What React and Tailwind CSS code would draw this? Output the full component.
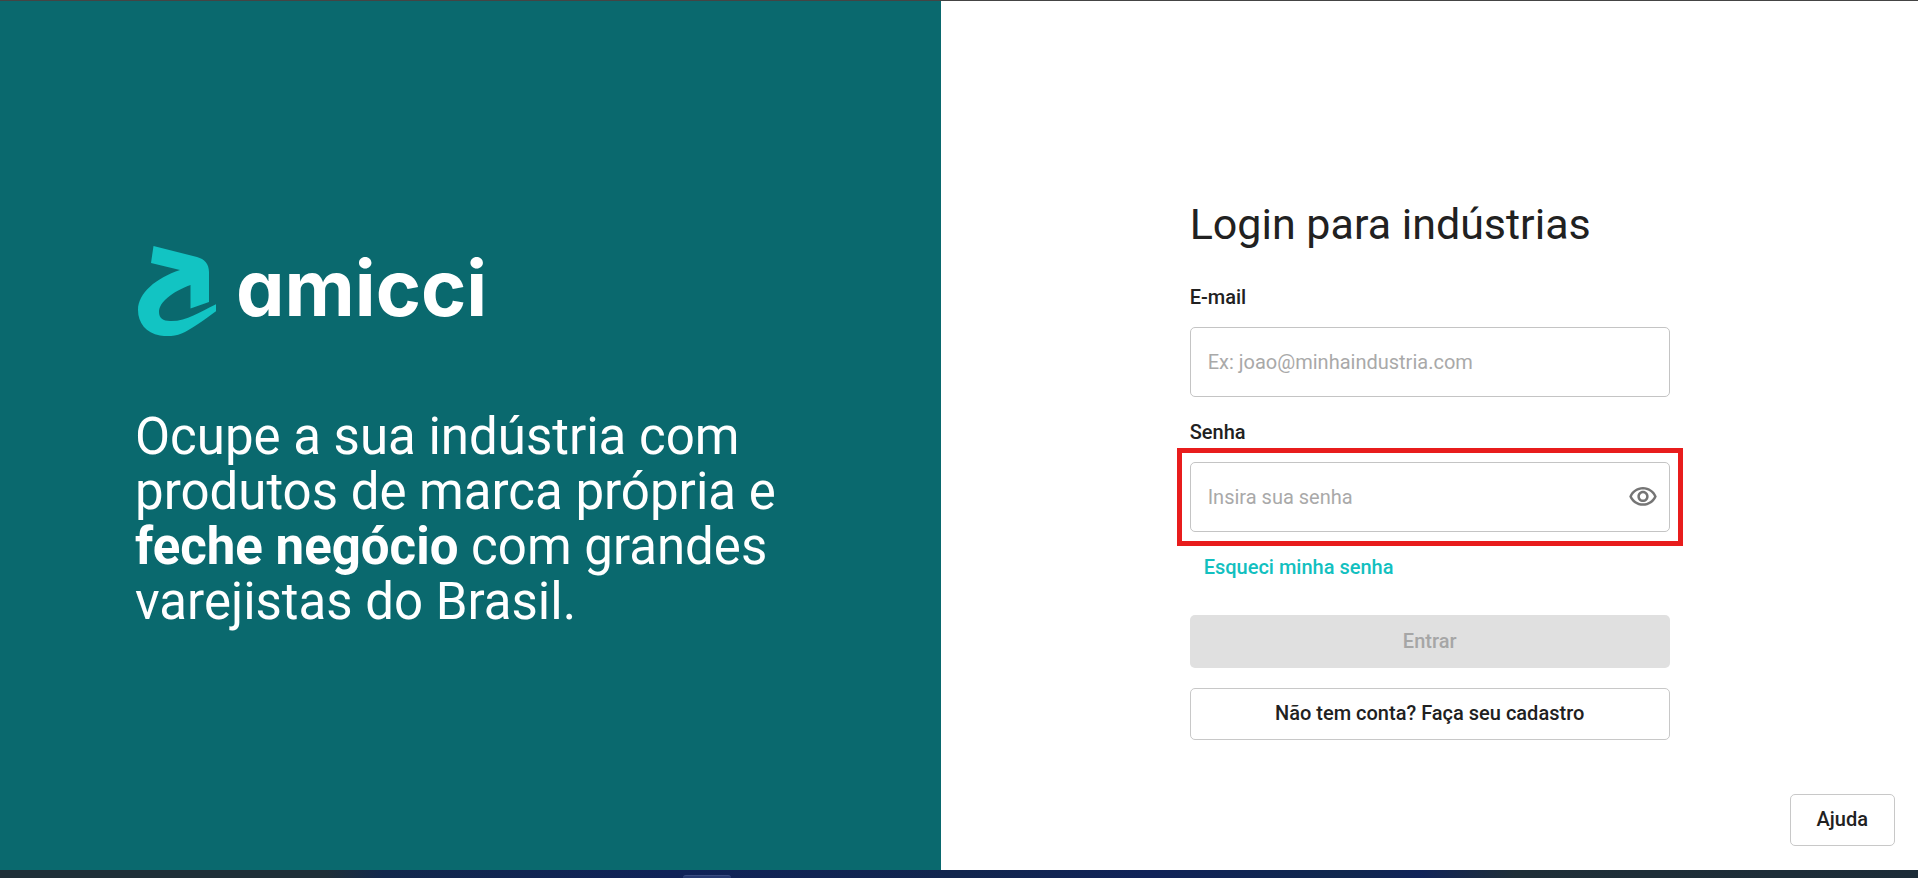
import { useState } from 'react';

function Logo() {
  return (
    <div className="flex items-center gap-5">
      <svg width="81" height="90" viewBox="-1 0 81 90" aria-hidden="true">
        <path
          fill="#12c4c3"
          d="M17.500 0 L61 11 C68.500 13 73 18 73 26 V56 L54.500 62.500 V39 C36 46 23 56 23 66 C23 72 27 75 34 75 C51 75.500 63 66 80.500 58 V65 C68 74 57 82 49 86 C41 90 33 91 24 89.500 C10 87 2 77 2 64 C2 47 20 32 44 24 L15 17 Z"
        />
      </svg>
      <span className="pb-1.5 font-['Inter',sans-serif] text-[77px] leading-[84px] font-bold text-white [font-feature-settings:'cv11']">
        amicci
      </span>
    </div>
  );
}

function EyeIcon() {
  return (
    <svg width="30" height="30" viewBox="0 0 24 24" fill="currentColor" aria-hidden="true">
      <path d="M12 6c3.79 0 7.17 2.13 8.82 5.5C19.17 14.87 15.79 17 12 17s-7.17-2.13-8.82-5.5C4.83 8.13 8.21 6 12 6m0-2C7 4 2.73 7.11 1 11.5 2.73 15.89 7 19 12 19s9.27-3.11 11-7.5C21.27 7.11 17 4 12 4zm0 5c1.38 0 2.5 1.12 2.5 2.5S13.38 14 12 14s-2.5-1.12-2.5-2.5S10.62 9 12 9m0-2c-2.48 0-4.5 2.02-4.5 4.5S9.52 16 12 16s4.5-2.02 4.5-4.5S14.48 7 12 7z" />
    </svg>
  );
}

function App() {
  const [email, setEmail] = useState('');
  const [password, setPassword] = useState('');
  const [showPassword, setShowPassword] = useState(false);

  const canSubmit = email !== '' && password !== '';

  return (
    <div className="flex min-h-screen flex-col border-t border-[#444444] bg-white font-['Roboto',sans-serif] text-[#212121]">
      <div className="flex flex-1">
        {/* Brand panel */}
        <section className="flex w-[49.08%] flex-col justify-center gap-[73px] bg-[#0a696e] px-[135px] pt-1">
          <Logo />
          <p className="-mr-8 text-[51px] leading-[55px] text-white">
            Ocupe a sua indústria com produtos de marca própria e{' '}
            <strong className="font-bold">feche negócio</strong> com grandes varejistas do Brasil.
          </p>
        </section>

        {/* Login form */}
        <main className="relative flex flex-1 flex-col items-center justify-center">
          <form className="flex w-[480px] flex-col pt-[68px]" onSubmit={(e) => e.preventDefault()}>
            <h1 className="mb-9 text-[43px] leading-[50px]">Login para indústrias</h1>

            <label htmlFor="email" className="mb-[18px] text-xl leading-6 font-medium">
              E-mail
            </label>
            <input
              id="email"
              type="email"
              value={email}
              onChange={(e) => setEmail(e.target.value)}
              placeholder="Ex: joao@minhaindustria.com"
              className="mb-[23px] h-[70px] w-full rounded-[5px] border border-[#c4c4c4] px-[17px] text-xl outline-none placeholder:text-[#a9a9a9]"
            />

            <label htmlFor="password" className="text-xl leading-6 font-medium">
              Senha
            </label>
            <div className="-mx-[13px] mt-1 border-[5px] border-[#e81c1c] px-2 py-[9px]">
              <div className="flex h-[70px] items-center rounded-[5px] border border-[#c4c4c4] pr-[11px] pl-[17px]">
                <input
                  id="password"
                  type={showPassword ? 'text' : 'password'}
                  value={password}
                  onChange={(e) => setPassword(e.target.value)}
                  placeholder="Insira sua senha"
                  className="min-w-0 flex-1 text-xl outline-none placeholder:text-[#a9a9a9]"
                />
                <button
                  type="button"
                  aria-label="Mostrar senha"
                  onClick={() => setShowPassword(!showPassword)}
                  className="text-[#757575]"
                >
                  <EyeIcon />
                </button>
              </div>
            </div>

            <a href="#" className="mt-[9px] ml-[14px] self-start text-xl leading-6 font-medium text-[#12c0bf]">
              Esqueci minha senha
            </a>

            <button
              type="submit"
              disabled={!canSubmit}
              className="mt-9 h-[53px] rounded-[5px] bg-[#12c0bf] pb-0.5 text-xl font-medium text-white disabled:bg-[#e0e0e0] disabled:text-[#a6a6a6]"
            >
              Entrar
            </button>
            <button
              type="button"
              className="mt-5 h-[52px] rounded-[5px] border border-[#c8c8c8] pb-0.5 text-xl font-medium"
            >
              Não tem conta? Faça seu cadastro
            </button>
          </form>

          <button
            type="button"
            className="absolute right-[23px] bottom-6 h-[52px] rounded-[5px] border border-[#c8c8c8] px-[26px] pb-0.5 text-xl font-medium"
          >
            Ajuda
          </button>
        </main>
      </div>

      <footer className="flex h-2 items-end bg-[linear-gradient(90deg,#1f2f38_0%,#1f2f38_17%,#12284c_20%,#102358_35%,#12264e_50%,#102358_60%,#10284e_70%,#102358_74%,#1f2f38_79%,#1c2c38_100%)]">
        <div className="ml-[683px] h-[3px] w-12 rounded-t-sm border-t border-[#3a4c80] bg-[#263a70]" />
      </footer>
    </div>
  );
}

export default App;
